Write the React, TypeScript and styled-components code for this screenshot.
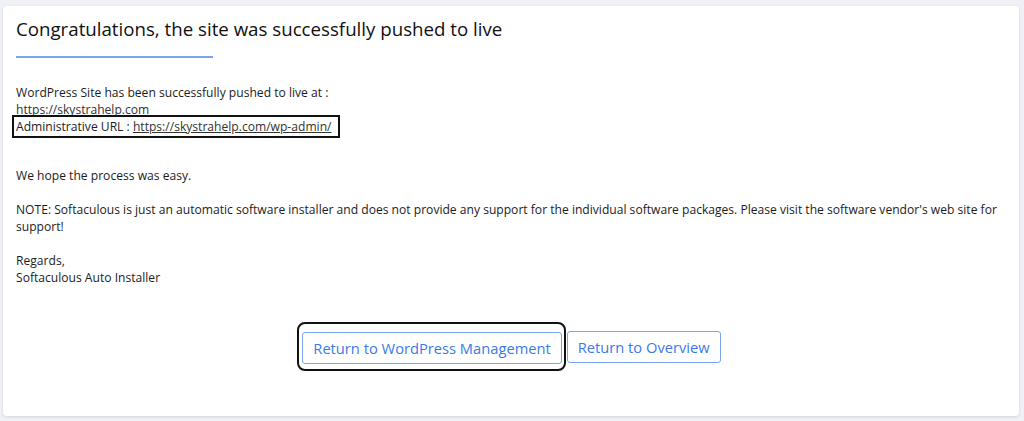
import React from "react";
import styled, { createGlobalStyle } from "styled-components";

const Global = createGlobalStyle`
  html, body { margin: 0; padding: 0; }
  body {
    background: #eff1f6;
    font-family: "Open Sans", "Liberation Sans", sans-serif;
    color: #1c1c1c;
  }
`;

const Page = styled.div`
  padding: 6px 5px 5px 3px;
  height: 421px;
  box-sizing: border-box;
`;

const Card = styled.section`
  background: #ffffff;
  border-radius: 4px;
  box-shadow: 0 1px 3px rgba(40, 50, 80, 0.14);
  height: 410px;
  box-sizing: border-box;
  padding: 11px 13px 0 13px;
  display: flex;
  flex-direction: column;
`;

const Title = styled.h1`
  margin: 0;
  font-size: 18.7px;
  font-weight: 400;
  line-height: 23px;
  color: #111;
`;

const Rule = styled.div`
  width: 197px;
  height: 2px;
  background: #79a4f0;
  margin-top: 16px;
`;

const Body = styled.div`
  margin-top: 26px;
  font-size: 12.1px;
  line-height: 17px;
`;

const Para = styled.p<{ $gap?: number }>`
  margin: ${(p) => p.$gap ?? 0}px 0 0 0;
`;

const Link = styled.a`
  color: #333;
  text-decoration: underline;
`;

const Highlight = styled.span`
  display: inline-block;
  border: 2px solid #111;
  padding: 1px 6px 1px 2px;
  margin: -3px 0 -3px -4px;
`;

const Actions = styled.div`
  margin-top: 36px;
  display: flex;
  justify-content: center;
  align-items: center;
  gap: 1px;
  padding-right: 4px;
`;

const Focus = styled.div`
  border: 2px solid #111;
  border-radius: 8px;
  padding: 8px 2px 5px 3px;
`;

const Button = styled.button`
  font-family: inherit;
  background: #fff;
  color: #3a7be8;
  border: 1px solid #7aa5f0;
  border-radius: 3px;
  font-size: 14.7px;
  height: 32px;
  padding: 0 10px;
  cursor: pointer;
`;

export default function App() {
  return (
    <>
      <Global />
      <Page>
        <Card>
          <Title>Congratulations, the site was successfully pushed to live</Title>
          <Rule />
          <Body>
            <Para>WordPress Site has been successfully pushed to live at :</Para>
            <Para>
              <Link href="#">https://skystrahelp.com</Link>
            </Para>
            <Para>
              <Highlight>
                Administrative URL : <Link href="#">https://skystrahelp.com/wp-admin/</Link>
              </Highlight>
            </Para>
            <Para $gap={32}>We hope the process was easy.</Para>
            <Para $gap={17}>
              NOTE: Softaculous is just an automatic software installer and does not provide any support for the
              individual software packages. Please visit the software vendor's web site for support!
            </Para>
            <Para $gap={17}>
              Regards,
              <br />
              Softaculous Auto Installer
            </Para>
          </Body>
          <Actions>
            <Focus>
              <Button>Return to WordPress Management</Button>
            </Focus>
            <Button>Return to Overview</Button>
          </Actions>
        </Card>
      </Page>
    </>
  );
}
